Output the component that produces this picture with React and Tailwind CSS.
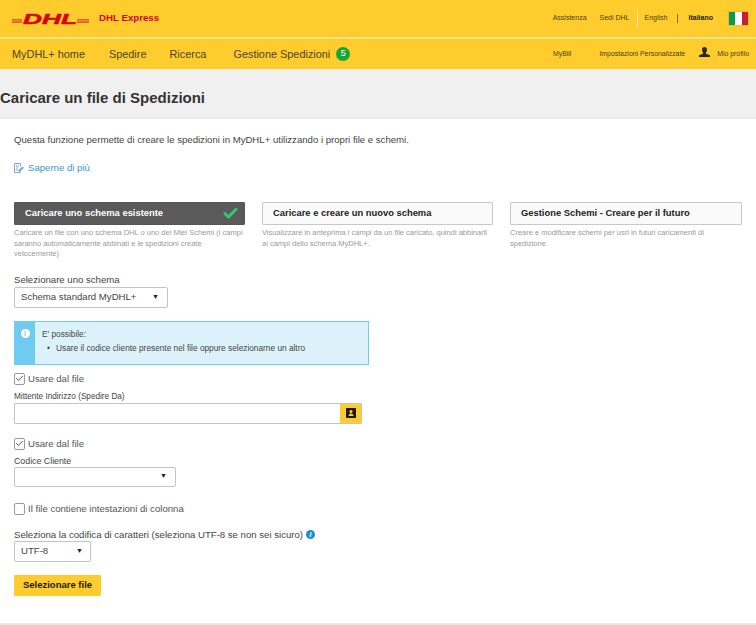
import { Check } from 'lucide-react';

const arial = { fontFamily: '"Liberation Sans", Arial, sans-serif' };

function DhlLogo() {
  return (
    <svg width="77" height="18" viewBox="0 0 77 18" className="shrink-0">
      <g fill="#e2622a">
        <rect x="0" y="9" width="10" height="1.6" />
        <rect x="0" y="11.2" width="10" height="1.8" />
        <rect x="65" y="9" width="12" height="1.6" />
        <rect x="65" y="11.2" width="12" height="1.800" />
      </g>
      <text x="11" y="13.5" fontSize="14.5" fontWeight="900" fontStyle="italic" textLength="54" lengthAdjust="spacingAndGlyphs" style={arial} fill="#d40511" stroke="#d40511" strokeWidth="0.5">DHL</text>
    </svg>
  );
}

function TopBar() {
  return (
    <div className="flex h-[37px] items-center bg-[#ffcc2e] pl-3 pr-[7px]">
      <DhlLogo />
      <span className="ml-[10px] text-[9.7px] font-bold text-[#d40511]">DHL Express</span>
      <div className="ml-auto flex items-center text-[7px] text-[#4a3f15]">
        <span>Assistenza</span>
        <span className="ml-[13px]">Sedi DHL</span>
        <span className="mx-[7px] h-[18px] w-px bg-[#ffe9a6]" />
        <span>English</span>
        <span className="mx-[10px] h-[9px] w-px bg-[#7d6a22]" />
        <span className="font-bold text-[#222]">Italiano</span>
        <div className="ml-[15px] flex h-[15px] w-[21px] overflow-hidden rounded-[1px] border border-[#e8b93a]">
          <div className="flex-1 bg-[#0a9a4a]" />
          <div className="flex-1 bg-white" />
          <div className="flex-1 bg-[#c8202f]" />
        </div>
      </div>
    </div>
  );
}

function NavBar() {
  return (
    <div className="flex h-[32px] items-center border-t-2 border-[#ffe38c] bg-[#ffcc2e] pl-3 pr-[7px] shadow-[0_1px_2px_rgba(0,0,0,0.12)]">
      <div className="flex items-center text-[10.9px] text-[#4b4520]">
        <span>MyDHL+ home</span>
        <span className="ml-6">Spedire</span>
        <span className="ml-[23px]">Ricerca</span>
        <span className="ml-[27px]">Gestione Spedizioni</span>
        <span className="ml-[6px] flex h-[14px] w-[14px] items-center justify-center rounded-full bg-[#16a832] text-[9px] text-white">5</span>
      </div>
      <div className="ml-auto flex items-center text-[6.9px] text-[#4a3f15]">
        <span>MyBill</span>
        <span className="ml-[28px]">Impostazioni Personalizzate</span>
        <svg width="11" height="11" viewBox="0 0 11 11" className="ml-[14px] -mt-[3px]">
          <path d="M5.500 0c1.600 0 2.500 1.100 2.500 2.700 0 1.200-.5 2.100-1 2.800v1.200l3.600 1.400c.3.1.4.4.4.7V10H0V8.800c0-.3.1-.6.4-.7L4 6.700V5.500c-.5-.7-1-1.600-1-2.800C3 1.100 3.900 0 5.500 0z" fill="#2a2a2a" />
        </svg>
        <span className="ml-[7px]">Mio profilo</span>
      </div>
    </div>
  );
}

function SchemaTab({ active, title, children, className }) {
  return (
    <div className={className}>
      <div
        className={
          active
            ? 'flex h-[23px] items-center justify-between rounded-[1px] border border-[#555] bg-[#5a5a5a] pl-[10px] pr-[5px] text-[9.4px] font-bold text-white'
            : 'flex h-[23px] items-center rounded-[1px] border-[1.5px] border-[#c8c8c8] bg-[#fafafa] pl-[10px] text-[9.4px] font-bold text-[#1c1c1c]'
        }
      >
        <span>{title}</span>
        {active && <Check size={17} strokeWidth={4} className="text-[#2ecc71]" />}
      </div>
      <p className="mt-[3px] text-[7.5px] leading-[10.5px] text-[#9a9a9a]">{children}</p>
    </div>
  );
}

function SelectBox({ value, className }) {
  return (
    <div className={`flex items-center justify-between rounded-[2px] border-[1.5px] border-[#c4c4c4] bg-white text-[9.6px] text-[#444] ${className}`}>
      <span>{value}</span>
      <span className="text-[7px] text-[#222]">▼</span>
    </div>
  );
}

function CheckLine({ checked, label, className }) {
  return (
    <div className={`flex items-center ${className}`}>
      <span className="flex h-[12px] w-[11px] items-center justify-center rounded-[2px] border-[1.5px] border-[#9a9a9a] bg-white">
        {checked && <Check size={11} strokeWidth={2.5} className="text-[#444]" />}
      </span>
      <span className="ml-[3px] text-[9.6px] leading-[16px] text-[#555]">{label}</span>
    </div>
  );
}

export default function App() {
  return (
    <div className="h-[625px] overflow-hidden bg-white" style={arial}>
      <TopBar />
      <NavBar />
      <div className="flex h-[50px] items-center border-b border-[#e4e4e4] bg-[#f0f0f0]">
        <h1 className="pt-[10px] text-[15px] font-bold text-[#333]">Caricare un file di Spedizioni</h1>
      </div>

      <div className="px-[14px]">
        <p className="mt-[15px] text-[9.6px] leading-[12px] text-[#444]">
          Questa funzione permette di creare le spedizioni in MyDHL+ utilizzando i propri file e schemi.
        </p>
        <div className="mt-[16px] flex h-[12px] items-center text-[9.6px] text-[#3f97c4]">
          <svg width="10" height="10" viewBox="0 0 10 10" fill="none" stroke="#7fa9c4" strokeWidth="1" className="mr-1">
            <path d="M1 .5h5.500v3M6.500 8.500V9.500H.5V.500M2 3h3M2 5h2M2 7h2" />
            <path d="M4.500 7.500l4-3.500 1 1-4 3.500z" fill="#7fa9c4" />
          </svg>
          Saperne di più
        </div>

        <div className="mt-[28px] flex">
          <SchemaTab active title="Caricare uno schema esistente" className="w-[231px]">
            Caricare un file con uno schema DHL o uno dei Miei Schemi (i campi saranno automaticamente abbinati e le spedizioni create velocemente)
          </SchemaTab>
          <SchemaTab title="Caricare e creare un nuovo schema" className="ml-[17px] w-[231px]">
            Visualizzare in anteprima i campi da un file caricato, quindi abbinarli ai campi dello schema MyDHL+.
          </SchemaTab>
          <SchemaTab title="Gestione Schemi - Creare per il futuro" className="ml-[17px] w-[232px]">
            Creare e modificare schemi per usrl in futuri caricamenti di spedizione.
          </SchemaTab>
        </div>

        <div className="mt-[14px] text-[9.6px] leading-[12px] text-[#444]">Selezionare uno schema</div>
        <SelectBox value="Schema standard MyDHL+" className="mt-[1px] h-[21px] w-[154px] pl-[6px] pr-[8px]" />

        <div className="mt-[13px] flex h-[44px] w-[355px] border border-[#6fcdf0] bg-[#dcf2fb]">
          <div className="flex w-[20px] justify-center bg-[#6fcbf0] pt-[7px]">
            <span className="flex h-[9px] w-[9px] items-center justify-center rounded-full bg-white text-[7px] font-bold leading-none text-[#6fcbf0]">i</span>
          </div>
          <div className="pl-[7px] pt-[5px] text-[8.3px] leading-[14.5px] text-[#444]">
            <div>E' possibile:</div>
            <div className="flex">
              <span className="ml-[5px] w-[9px]">•</span>
              <span>Usare il codice cliente presente nel file oppure selezionarne un altro</span>
            </div>
          </div>
        </div>

        <CheckLine checked label="Usare dal file" className="mt-[6px]" />
        <div className="mt-[5px] text-[8.2px] leading-[10px] text-[#444]">Mittente Indirizzo (Spedire Da)</div>
        <div className="mt-[1px] flex h-[21px] w-[348px] justify-end rounded-[1px] border-[1.5px] border-[#c4c4c4] bg-white">
          <span className="flex w-[21px] items-center justify-center bg-[#ffcc2e]">
            <svg width="10" height="10" viewBox="0 0 10 10">
              <rect width="10" height="10" fill="#1c1a10" />
              <circle cx="5" cy="3.600" r="1.600" fill="#ffcc2e" />
              <path d="M2.500 8c0-1.700 1-2.600 2.500-2.600S7.500 6.300 7.500 8z" fill="#ffcc2e" />
            </svg>
          </span>
        </div>

        <CheckLine checked label="Usare dal file" className="mt-[12px]" />
        <div className="mt-[4px] text-[8.8px] leading-[10px] text-[#444]">Codice Cliente</div>
        <SelectBox value="" className="mt-[1px] h-[20px] w-[162px] pr-[8px]" />

        <CheckLine label="Il file contiene intestazioni di colonna" className="mt-[14px]" />

        <div className="mt-[12px] flex items-center text-[9.6px] leading-[12px] text-[#444]">
          Seleziona la codifica di caratteri (seleziona UTF-8 se non sei sicuro)
          <span className="ml-[3px] flex h-[9px] w-[9px] items-center justify-center rounded-full bg-[#1f8fcb] text-[7px] font-bold italic text-white">i</span>
        </div>
        <SelectBox value="UTF-8" className="h-[21px] w-[77px] pl-[6px] pr-[7px]" />

        <button className="mt-[13px] flex h-[21px] w-[87px] items-center justify-center rounded-[1px] bg-[#ffcc2e] text-[9.5px] font-bold text-[#1c1a10]">
          Selezionare file
        </button>
      </div>
      <div className="mt-[27px] h-[2px] bg-[#e8e8e8]" />
    </div>
  );
}
